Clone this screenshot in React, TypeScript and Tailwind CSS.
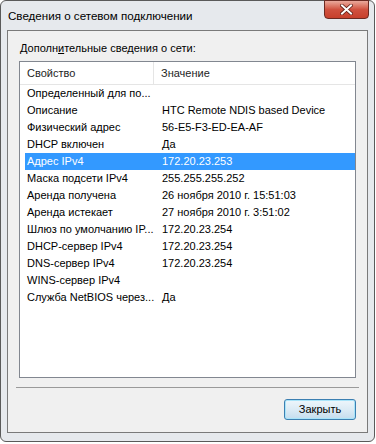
import React from 'react';

const rows: [string, string][] = [
  ['Определенный для по...', ''],
  ['Описание', 'HTC Remote NDIS based Device'],
  ['Физический адрес', '56-E5-F3-ED-EA-AF'],
  ['DHCP включен', 'Да'],
  ['Адрес IPv4', '172.20.23.253'],
  ['Маска подсети IPv4', '255.255.255.252'],
  ['Аренда получена', '26 ноября 2010 г. 15:51:03'],
  ['Аренда истекает', '27 ноября 2010 г. 3:51:02'],
  ['Шлюз по умолчанию IP...', '172.20.23.254'],
  ['DHCP-сервер IPv4', '172.20.23.254'],
  ['DNS-сервер IPv4', '172.20.23.254'],
  ['WINS-сервер IPv4', ''],
  ['Служба NetBIOS через...', 'Да'],
];

const App = () => {
  return (
    <div
      className="w-[376px] h-[444px] bg-white text-[11px] text-black"
      style={{ fontFamily: '"Liberation Sans", Arial, sans-serif' }}
    >
      <div className="w-[375px] h-[442px] flex flex-col rounded-[6px] border border-[#5a5a5a] bg-[#e6e9ed]">
        {/* title bar */}
        <div className="h-[29px] flex items-start shrink-0">
          <span className="pl-[7px] pt-[7px] text-[11.6px] leading-[16px] text-black">
            Сведения о сетевом подключении
          </span>
          <div className="ml-auto mr-[5px] mt-[-1px] w-[45px] h-[19px] rounded-b-[4px] border border-[#6b2a22] bg-gradient-to-b from-[#e9a99c] via-[#d0513f] to-[#c7402c] flex items-center justify-center">
            <svg width="13" height="11" viewBox="0 0 13 11">
              <path d="M2 1.5 L11 9.5 M11 1.5 L2 9.5" stroke="#5c1d14" strokeWidth="3.6" strokeLinecap="square" />
              <path d="M2 1.5 L11 9.5 M11 1.5 L2 9.5" stroke="#ffffff" strokeWidth="2" strokeLinecap="square" />
            </svg>
          </div>
        </div>

        {/* client area */}
        <div className="mx-[6px] mb-[8px] flex-1 flex flex-col border border-[#7a7a7a] bg-[#f0f0f0]">
          <div className="pl-[12px] pt-[10px] leading-[15px]">
            Дополн<span className="underline">и</span>тельные сведения о сети:
          </div>
          <div className="mx-[11px] mt-[5px] h-[317px] border border-[#828790] bg-white flex flex-col">
            <div className="h-[23px] flex border-b border-[#e5e5e5] shrink-0 text-[#1e1e1e]">
              <div className="w-[134px] border-r border-[#e5e5e5] pl-[7px] flex items-center">Свойство</div>
              <div className="flex-1 pl-[7px] flex items-center">Значение</div>
            </div>
            {rows.map(([k, v], i) => (
              <div
                key={i}
                className={
                  i === 4
                    ? 'h-[17px] ml-[5px] flex items-center bg-[#3399ff] text-white'
                    : 'h-[17px] ml-[5px] flex items-center'
                }
              >
                <div className="w-[135px] pl-[2px] whitespace-nowrap overflow-hidden">{k}</div>
                <div className="flex-1 pl-[2px] whitespace-nowrap">{v}</div>
              </div>
            ))}
          </div>
          <div className="mx-[8px] h-[10px] border-b border-[#9a9a9a]" />
          <div className="flex justify-end pr-[11px] pt-[11px]">
            <button className="w-[72px] h-[21px] rounded-[3px] border border-[#3c7fb1] bg-gradient-to-b from-[#eef6fb] via-[#dcebf5] to-[#c4ddee] shadow-[inset_0_0_0_1px_#a9e4f9] text-black leading-none">
              Закрыть
            </button>
          </div>
        </div>
      </div>
    </div>
  );
};

export default App;
